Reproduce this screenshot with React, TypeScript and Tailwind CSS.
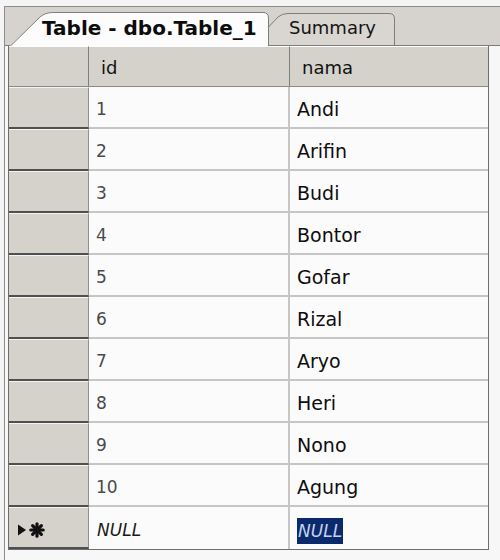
import React from "react";

const rows: [number, string][] = [
    [1, "Andi"],
    [2, "Arifin"],
    [3, "Budi"],
    [4, "Bontor"],
    [5, "Gofar"],
    [6, "Rizal"],
    [7, "Aryo"],
    [8, "Heri"],
    [9, "Nono"],
    [10, "Agung"],
];

function NewRowMarker() {
    return (
        <svg width="34" height="16" viewBox="0 0 34 16">
            <path d="M0 2.5 L8 8 L0 13.5 Z" fill="#111" />
            <g stroke="#111" strokeWidth="3.2" strokeLinecap="round">
                <line x1="19" y1="1.8" x2="19" y2="14.2" />
                <line x1="12.8" y1="8" x2="25.2" y2="8" />
                <line x1="14.6" y1="3.6" x2="23.4" y2="12.4" />
                <line x1="23.4" y1="3.6" x2="14.6" y2="12.4" />
            </g>
        </svg>
    );
}

function RowHeader({ children }: { children?: React.ReactNode }) {
    return (
        <div className="flex items-center pl-[9px] pt-[4px] bg-[#d5d2cc] border-r border-r-[#8f8f8f] border-t border-t-[#f4f4f4] border-b-2 border-b-[#4f4f4f]">
            {children}
        </div>
    );
}

export default function App() {
    return (
        <div className="w-[500px] h-[560px] bg-[#f4f4f4] pt-[6px] pl-[4px] overflow-hidden font-['DejaVu_Sans',sans-serif]">
            <div className="h-full border-l border-t border-[#8c8c8c] bg-[#f7f7f7] flex flex-col">
                {/* Tab strip */}
                <div className="h-[39px] shrink-0 bg-[#d6d3ce] border-b border-[#7c7c7c] flex items-end pl-[5px]">
                    <div className="relative z-10 w-[259px] h-[34px] -mb-[1px] flex items-center pl-[32px] pb-[2px]">
                        <svg className="absolute inset-0" width="259" height="34" viewBox="0 0 259 34">
                            <path d="M0 34 L30 5 Q35 0.5 43 0.5 L253 0.5 Q258.5 0.5 258.5 6 L258.5 34 Z" fill="#fcfcfc" />
                            <path d="M0.5 34 L30 5 Q35 0.5 43 0.5 L253 0.5 Q258.5 0.5 258.5 6 L258.5 34" fill="none" stroke="#7d7d7d" />
                        </svg>
                        <span className="relative text-[20px] font-bold text-[#0c0c0c] leading-none whitespace-nowrap">
                            Table - dbo.Table_1
                        </span>
                    </div>
                    <div className="relative z-0 -ml-[18px] w-[144px] h-[32px] flex items-center pl-[38px] pb-[2px]">
                        <svg className="absolute inset-0" width="144" height="32" viewBox="0 0 144 32">
                            <path d="M0 32 L27 4 Q31 0.5 37 0.5 L138 0.5 Q143.5 0.5 143.5 6 L143.5 32 Z" fill="#d9d6d1" />
                            <path d="M0.5 32 L27 4 Q31 0.5 37 0.5 L138 0.5 Q143.5 0.5 143.5 6 L143.5 32" fill="none" stroke="#7d7d7d" />
                        </svg>
                        <span className="relative text-[18px] text-[#141414] leading-none whitespace-nowrap">Summary</span>
                    </div>
                </div>

                {/* Grid */}
                <div className="ml-[3px] w-[481px] border-l border-r border-b border-[#6e6e6e] bg-[#fbfbfb]">
                    <div className="grid grid-cols-[80px_201px_1fr] h-[41px] bg-[#d5d2cc] border-b border-[#8a8a8a]">
                        <div className="border-t border-white border-r border-r-[#7f7f7f]" />
                        <div className="flex items-center pl-[12px] pt-[2px] border-t border-white border-r border-r-[#7f7f7f] text-[18px] text-[#111]">
                            id
                        </div>
                        <div className="flex items-center pl-[12px] pt-[2px] border-t border-white text-[18px] text-[#111]">nama</div>
                    </div>

                    {rows.map(([id, nama]) => (
                        <div key={id} className="grid grid-cols-[80px_201px_1fr] h-[42px]">
                            <RowHeader />
                            <div className="flex items-center pl-[7px] pt-[6px] border-b-2 border-r-2 border-[#c6c6c6] text-[17px] text-[#4a4a4a]">
                                {id}
                            </div>
                            <div className="flex items-center pl-[7px] pt-[5px] border-b-2 border-[#c6c6c6] text-[19px] text-[#0d0d0d]">
                                {nama}
                            </div>
                        </div>
                    ))}

                    <div className="grid grid-cols-[80px_201px_1fr] h-[42px]">
                        <RowHeader>
                            <NewRowMarker />
                        </RowHeader>
                        <div className="flex items-center pl-[8px] pt-[6px] border-r-2 border-[#c6c6c6] text-[17px] italic text-[#1a1a1a]">
                            NULL
                        </div>
                        <div className="flex items-center pl-[7px] pt-[6px]">
                            <span className="bg-[#0b2a6e] text-[#c9d2ea] italic text-[17px] leading-[26px] px-[1px]">NULL</span>
                        </div>
                    </div>
                </div>
            </div>
        </div>
    );
}
